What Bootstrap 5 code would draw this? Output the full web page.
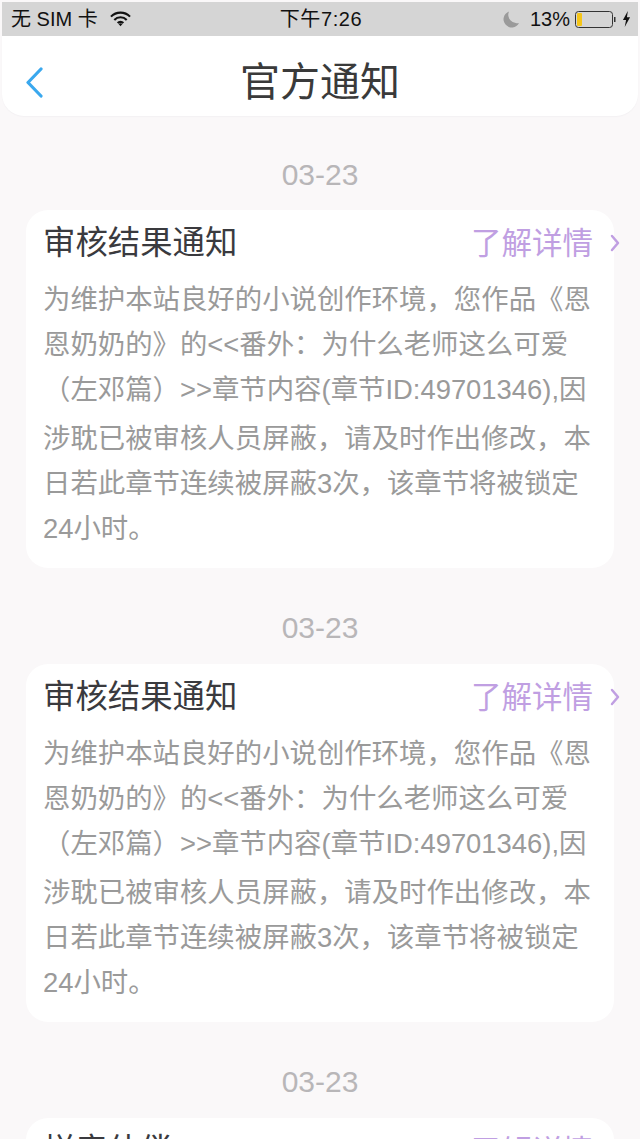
<!DOCTYPE html>
<html lang="zh-CN">
<head>
    <meta charset="UTF-8">
    <meta name="viewport" content="width=device-width, initial-scale=1.0">
    <title>官方通知</title>
    <link rel="stylesheet" href="https://cdn.jsdelivr.net/npm/bootstrap@5.3.0/dist/css/bootstrap.min.css">
    <style>
        html, body {
            height: 1139px;
            overflow: hidden;
        }

        body {
            background-color: #faf8f9;
            font-family: "Liberation Sans", "Noto Sans CJK SC", sans-serif;
        }

        .status-bar {
            height: 34px;
            margin: 2px 2px 0;
            padding: 0 7px 0 9px;
            background-color: #d5d5d5;
            color: #111;
            font-size: 20px;
        }

        .status-side {
            flex: 1 1 0;
        }

        .status-wifi {
            margin-left: 12px;
        }

        .status-time {
            font-size: 20px;
            letter-spacing: .6px;
        }

        .status-moon {
            margin-right: 11px;
        }

        .status-battery {
            margin: 0 6px 0 5px;
        }

        .top-nav {
            height: 80px;
            margin: 0 2px;
            padding: 12px 0 0 24px;
            background-color: #fff;
            border-radius: 0 0 22px 22px;
            box-shadow: 0 1px 1px #f3f1f3;
        }

        .top-nav-side {
            flex: 1 1 0;
        }

        .top-nav-title {
            font-size: 40px;
            font-weight: 400;
            line-height: 1;
            color: #3a3a3a;
            margin: 0 24px 0 0;
        }

        .notice-date {
            margin-top: 46px;
            height: 28px;
            line-height: 28px;
            text-align: center;
            font-size: 30px;
            color: #b8b6b8;
        }

        .notice-date:first-child {
            margin: 45px 0 -1px;
        }

        .notice-item {
            margin: 22px 26px 0;
            height: 358px;
            padding: 11px 17px 0;
            background-color: #fff;
            border-radius: 22px;
        }

        .notice-title {
            font-size: 32.4px;
            font-weight: 400;
            line-height: 44px;
            color: #3a3a3e;
            margin: 0;
        }

        .notice-more {
            font-size: 30.5px;
            line-height: 44px;
            color: #c09fe2;
        }

        .notice-arrow {
            margin: 0 -23px 0 17px;
        }

        .notice-text {
            margin: 12px 0 0;
            font-size: 27.4px;
            line-height: 45px;
            color: #9a9a9a;
            white-space: nowrap;
        }

        .notice-text div:nth-child(3) {
            padding-bottom: 4px;
        }
    </style>
</head>
<body>
    <div class="status-bar d-flex align-items-center">
        <div class="status-side d-flex align-items-center">
            <span>无 SIM 卡</span>
            <svg class="status-wifi" width="21" height="16" viewBox="0 0 22 16" fill="none" stroke="#111" stroke-width="2.2"><path d="M1 5.5a14 14 0 0 1 20 0"/><path d="M4.5 9a9 9 0 0 1 13 0"/><path d="M8 12.3a4.2 4.2 0 0 1 6 0"/><path d="M11 15.500l-2-2.200a3 3 0 0 1 4 0z" fill="#111" stroke="none"/></svg>
        </div>
        <span class="status-time">下午7:26</span>
        <div class="status-side d-flex align-items-center justify-content-end">
            <svg class="status-moon" width="16" height="17" viewBox="0 0 16 17"><path d="M6 0.5a8.2 8.2 0 1 0 10 11.5A8.5 8.5 0 0 1 6 0.5z" fill="#9a9a9a"/></svg>
            <span>13%</span>
            <svg class="status-battery" width="41" height="17" viewBox="0 0 41 17"><rect x="0.5" y="0.5" width="37" height="16" rx="3" fill="none" stroke="#333"/><rect x="2" y="2" width="5" height="13" rx="1" fill="#f5c518"/><path d="M39 6h1.500v5H39z" fill="#333"/></svg>
            <svg width="9" height="16" viewBox="0 0 10 18"><path d="M6.500 0L1 10h3.500L3 18l6-11H5.500z" fill="#111"/></svg>
        </div>
    </div>

    <div class="top-nav d-flex align-items-center">
        <div class="top-nav-side d-flex align-items-center">
            <svg width="17" height="31" viewBox="0 0 17 31" fill="none" stroke="#3aa8ee" stroke-width="3.200" stroke-linecap="round" stroke-linejoin="round"><path d="M15 2L2 15.500l13 13.500"/></svg>
        </div>
        <h1 class="top-nav-title">官方通知</h1>
        <div class="top-nav-side"></div>
    </div>

    <div id="notices"></div>

    <script>
        const bodyLines = [
            "为维护本站良好的小说创作环境，您作品《恩",
            "恩奶奶的》的&lt;&lt;番外：为什么老师这么可爱",
            "（左邓篇）&gt;&gt;章节内容(章节ID:49701346),因",
            "涉耽已被审核人员屏蔽，请及时作出修改，本",
            "日若此章节连续被屏蔽3次，该章节将被锁定",
            "24小时。"
        ];
        const notices = [
            { date: "03-23", title: "审核结果通知", lines: bodyLines },
            { date: "03-23", title: "审核结果通知", lines: bodyLines },
            { date: "03-23", title: "样章估偿", lines: [] }
        ];

        document.getElementById("notices").innerHTML = notices.map(n => `
            <div class="notice-date">${n.date}</div>
            <div class="notice-item">
                <div class="d-flex align-items-center justify-content-between">
                    <h2 class="notice-title">${n.title}</h2>
                    <div class="d-flex align-items-center">
                        <span class="notice-more">了解详情</span>
                        <svg class="notice-arrow" width="10" height="18" viewBox="0 0 10 18" fill="none" stroke="#c09fe2" stroke-width="2.500" stroke-linecap="round" stroke-linejoin="round"><path d="M2 2l6 7-6 7"/></svg>
                    </div>
                </div>
                <div class="notice-text">${n.lines.map(line => `<div>${line}</div>`).join("")}</div>
            </div>`).join("");
    </script>
    <script src="https://cdn.jsdelivr.net/npm/bootstrap@5.3.0/dist/js/bootstrap.bundle.min.js"></script>
</body>
</html>
